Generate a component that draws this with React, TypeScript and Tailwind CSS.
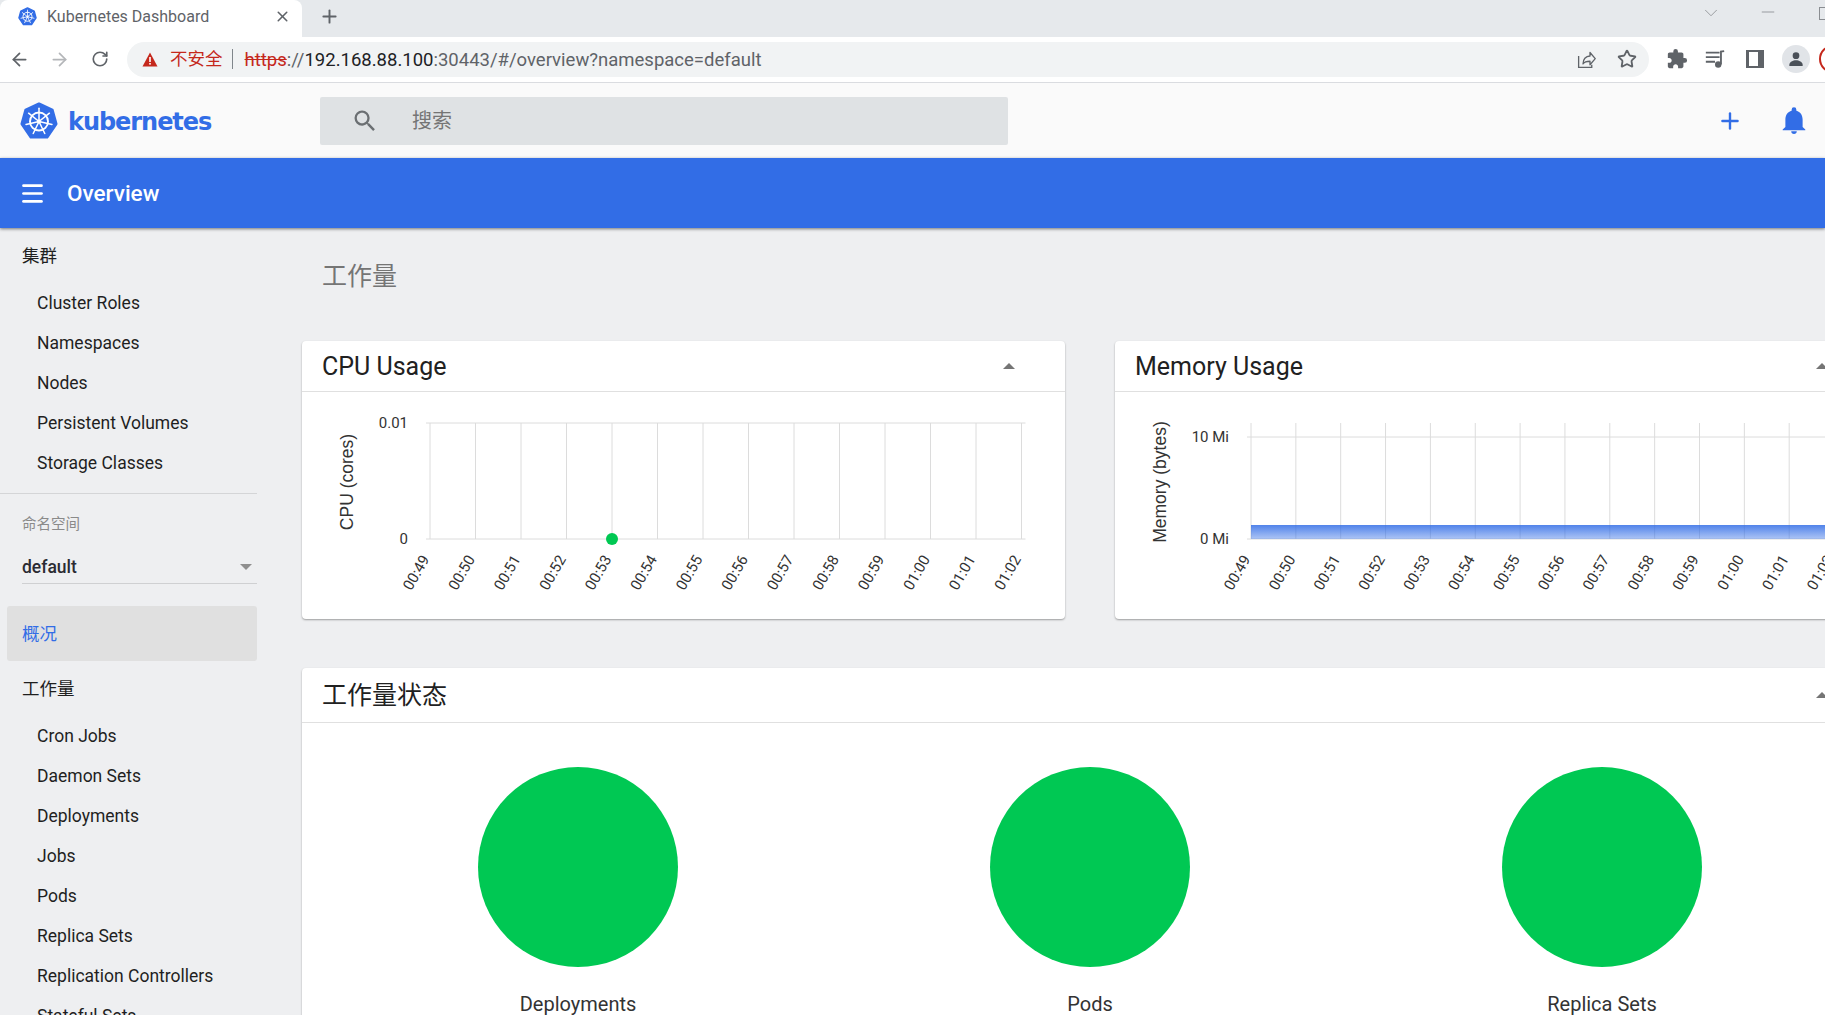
import { ArrowLeft, ArrowRight, RotateCw, Plus, Menu, X, Star, ChevronDown, Minus } from "lucide-react";

const times = ["00:49", "00:50", "00:51", "00:52", "00:53", "00:54", "00:55", "00:56", "00:57", "00:58", "00:59", "01:00", "01:01", "01:02"];

const roboto = "font-['Roboto','Noto_Sans_CJK_SC',sans-serif]";

function KubeLogo({ size }: { size: number }) {
  const spokes = [0, 1, 2, 3, 4, 5, 6].map((i) => (i * 360) / 7);
  return (
    <svg width={size} height={size} viewBox="0 0 40 40">
      <polygon
        points="20,2 34,8.5 38,23 28.5,37 11.5,37 2,23 6,8.5"
        fill="#326de6"
        stroke="#326de6"
        strokeWidth="3"
        strokeLinejoin="round"
      />
      <circle cx="20" cy="20.5" r="9.5" fill="none" stroke="#fff" strokeWidth="2" />
      {spokes.map((a) => (
        <line key={a} x1="20" y1="20.5" x2="20" y2="6.5" stroke="#fff" strokeWidth="1.6" strokeLinecap="round" transform={`rotate(${a} 20 20.5)`} />
      ))}
      <circle cx="20" cy="20.5" r="2.2" fill="#fff" />
    </svg>
  );
}

function TabStrip() {
  return (
    <div className="flex h-[37px] bg-[#e6e9ec]">
      <div className="flex w-[302px] items-center rounded-t-lg bg-white pb-[4px] pl-[18px] pr-[11px]">
        <KubeLogo size={19} />
        <span className={`ml-[10px] flex-1 text-[16px] text-[#5f6368] ${roboto}`}>Kubernetes Dashboard</span>
        <X size={17} className="text-[#5f6368]" strokeWidth={2.2} />
      </div>
      <div className="ml-[15px] flex w-[24px] items-center justify-center pb-[5px]">
        <Plus size={21} className="text-[#5f6368]" strokeWidth={2.2} />
      </div>
      <div className="flex flex-1 items-start justify-end pt-[2px] text-[#8a8d91]">
        <ChevronDown size={22} strokeWidth={0.9} />
        <Minus size={20} strokeWidth={1} className="ml-[36px]" />
        <div className="ml-[41px] mr-[-6px] mt-[5px] h-[13px] w-[12px] shrink-0 border border-[#8a8d91]" />
      </div>
    </div>
  );
}

function AddressBar() {
  return (
    <div className="flex h-[46px] items-center border-b border-[#dadce0] bg-white pb-[1px]">
      <div className="flex w-[127px] shrink-0 items-center pl-[9px] text-[#5f6368]">
        <ArrowLeft size={21} />
        <ArrowRight size={21} className="ml-[19px] text-[#b4b6b9]" />
        <RotateCw size={18} className="ml-[21px]" strokeWidth={2.2} />
      </div>
      <div className={`flex h-[35px] w-[1522px] shrink-0 items-center rounded-full bg-[#f1f3f4] pl-[15px] pr-[12px] ${roboto}`}>
        <svg width="16" height="15" viewBox="0 0 16 15">
          <path d="M8 0.5 L15.5 14.5 L0.5 14.5 Z" fill="#c5281c" />
          <rect x="7.2" y="5" width="1.6" height="5" fill="#fff" />
          <rect x="7.2" y="11" width="1.6" height="1.6" fill="#fff" />
        </svg>
        <span className="ml-[12px] pt-[1px] text-[17.5px] text-[#c5281c]">不安全</span>
        <span className="ml-[9px] h-[20px] w-px bg-[#80868b]" />
        <span className="ml-[12px] flex items-center pt-[3px] text-[18.5px]">
          <span className="text-[#c5281c] line-through">https</span>
          <span className="text-[#5f6368]">://</span>
          <span className="text-[#202124]">192.168.88.100</span>
          <span className="text-[#5f6368]">:30443/#/overview?namespace=default</span>
        </span>
        <div className="ml-auto flex items-center gap-[20px] text-[#5f6368]">
          <svg width="21" height="21" viewBox="0 0 24 24" fill="none" stroke="#5f6368" strokeWidth="1.5">
            <path d="M3 8v13h15v-3" />
            <path d="M8 17c0-5 3-9 8-9V4l6 7-6 7v-4c-3 0-6 0-8 3z" strokeLinejoin="round" />
          </svg>
          <Star size={20} strokeWidth={2.2} />
        </div>
      </div>
      <div className="flex flex-1 items-center pl-[17px] text-[#5f6368]">
        <svg className="shrink-0" width="22" height="22" viewBox="0 0 24 24" fill="#5f6368">
          <path d="M20.5 11H19V7c0-1.1-.9-2-2-2h-4V3.5a2.5 2.5 0 0 0-5 0V5H4c-1.1 0-1.99.9-1.99 2v3.8H3.5c1.49 0 2.7 1.21 2.7 2.7s-1.21 2.7-2.7 2.7H2V20c0 1.1.9 2 2 2h3.8v-1.5c0-1.49 1.21-2.7 2.7-2.7 1.49 0 2.7 1.21 2.7 2.7V22H17c1.1 0 2-.9 2-2v-4h1.5a2.5 2.5 0 0 0 0-5z" />
        </svg>
        <svg className="ml-[16px] shrink-0" width="22" height="22" viewBox="0 0 24 24" fill="none" stroke="#5f6368" strokeWidth="2">
          <path d="M2 5h15M2 10h15M2 15h10" />
          <path d="M18.5 18V4l3.5-.5" />
          <circle cx="15.5" cy="18" r="2.5" fill="#5f6368" />
        </svg>
        <div className="ml-[20px] flex h-[18px] w-[18px] shrink-0 justify-end border-[2.5px] border-l-[3px] border-[#5f6368] bg-white">
          <div className="h-full w-[4px] bg-[#5f6368]" />
        </div>
        <div className="ml-[18px] flex h-[28px] w-[28px] shrink-0 items-center justify-center rounded-full bg-[#e1e4e8]">
          <svg width="20" height="20" viewBox="0 0 24 24" fill="#4a5058">
            <circle cx="12" cy="8" r="4" />
            <path d="M4 19c0-3.5 4.5-5.5 8-5.5s8 2 8 5.5v1.5H4z" />
          </svg>
        </div>
        <div className="ml-[9px] h-[28px] w-[28px] shrink-0 rounded-full border-2 border-[#c5281c]" />
      </div>
    </div>
  );
}

function AppHeader() {
  return (
    <div className="flex h-[75px] items-center bg-[#fafafa]">
      <div className="flex w-[320px] items-center pl-[20px]">
        <KubeLogo size={38} />
        <span className="ml-[10px] pt-[2px] font-['DejaVu_Sans',sans-serif] text-[24px] font-bold tracking-[-1.05px] text-[#326de6]">kubernetes</span>
      </div>
      <div className={`flex h-[48px] w-[688px] items-center rounded-[2px] bg-[#dfe2e4] pl-[31px] ${roboto}`}>
        <svg width="28" height="28" viewBox="0 0 24 24" fill="#6b6f72">
          <path d="M15.5 14h-.79l-.28-.27A6.47 6.47 0 0 0 16 9.5 6.5 6.5 0 1 0 9.5 16c1.61 0 3.09-.59 4.23-1.57l.27.28v.79l5 4.99L20.49 19l-4.99-5zm-6 0C7.01 14 5 11.99 5 9.5S7.01 5 9.5 5 14 7.01 14 9.5 11.99 14 9.5 14z" />
        </svg>
        <span className="ml-[33px] text-[20px] text-[#757575]">搜索</span>
      </div>
      <div className="ml-auto flex items-center pr-[18px] text-[#326de6]">
        <Plus size={26} strokeWidth={2.2} />
        <svg className="ml-[38px]" width="26" height="28" viewBox="0 0 24 26" fill="#326de6">
          <path d="M12 25a2.6 2.6 0 0 0 2.6-2.4H9.4A2.6 2.6 0 0 0 12 25zm8-6.5v-7c0-4-2.2-7.2-5.8-8.1V2.5a2.2 2.2 0 0 0-4.4 0v.9C6.2 4.3 4 7.5 4 11.5v7L1.5 21v.6h21V21z" />
        </svg>
      </div>
    </div>
  );
}

function SideItem({ label }: { label: string }) {
  return <div className="flex h-10 items-center pl-[37px] text-[#1f1f1f]">{label}</div>;
}

function SideHead({ label }: { label: string }) {
  return <div className="flex h-10 items-center pl-[22px] text-[#1f1f1f]">{label}</div>;
}

function Sidebar() {
  return (
    <div className={`w-[302px] shrink-0 pt-[8px] text-[17.5px] ${roboto}`}>
      <SideHead label="集群" />
      <div className="mt-[7px]">
        {["Cluster Roles", "Namespaces", "Nodes", "Persistent Volumes", "Storage Classes"].map((l) => (
          <SideItem key={l} label={l} />
        ))}
      </div>
      <div className="mt-[10px] h-px w-[257px] bg-[#d4d5d7]" />
      <div className="mt-[23px] pl-[22px] text-[14.5px] leading-[16px] text-[#8a8a8a]">命名空间</div>
      <div className="ml-[22px] mt-[18px] flex h-[33px] w-[235px] items-center justify-between border-b border-[#cfd0d2] pr-[5px] font-medium text-[#2b2b33]">
        default
        <span className="h-0 w-0 border-x-[6px] border-t-[6px] border-x-transparent border-t-[#8f8f8f]" />
      </div>
      <div className="ml-[7px] mt-[22px] flex h-[55px] w-[250px] items-center rounded-[3px] bg-[#e0e0e0] pl-[15px] pt-[2px] text-[#326de6]">概况</div>
      <div className="mt-[8px]">
        <SideHead label="工作量" />
      </div>
      <div className="mt-[7px]">
        {["Cron Jobs", "Daemon Sets", "Deployments", "Jobs", "Pods", "Replica Sets", "Replication Controllers", "Stateful Sets"].map((l) => (
          <SideItem key={l} label={l} />
        ))}
      </div>
    </div>
  );
}

function Card({ title, headClass, children }: { title: string; headClass: string; children: React.ReactNode }) {
  return (
    <div className="overflow-hidden rounded-[4px] bg-white shadow-[0_1px_2px_rgba(0,0,0,0.35)]">
      <div className={`flex items-center justify-between border-b border-[#e0e0e0] pl-[20px] pr-[50px] text-[#212121] ${headClass}`}>
        <span className="pt-[2px]">{title}</span>
        <span className="h-0 w-0 border-x-[6px] border-b-[6px] border-x-transparent border-b-[#757575]" />
      </div>
      {children}
    </div>
  );
}

function Chart({ left, step, top, axis, axisX, ticks, area, dot }: { left: number; step: number; top: number; axis: string; axisX: number; ticks: { y: number; label: string }[]; area?: number; dot?: number }) {
  const bottom = 147;
  const right = left + step * 13;
  return (
    <svg width="763" height="227" className="block" fontFamily="Roboto, sans-serif">
      <defs>
        <linearGradient id="memArea" x1="0" y1="0" x2="0" y2="1">
          <stop offset="0" stopColor="#326de6" stopOpacity="0.85" />
          <stop offset="1" stopColor="#326de6" stopOpacity="0.4" />
        </linearGradient>
      </defs>
      {times.map((_, i) => (
        <line key={i} x1={left + i * step} x2={left + i * step} y1={top} y2={bottom} stroke="#dcdcdc" />
      ))}
      {ticks.map((t) => (
        <g key={t.label}>
          <line x1={left - 4} x2={right + 4} y1={t.y} y2={t.y} stroke="#dcdcdc" />
          <text x={left - 22} y={t.y + 5} textAnchor="end" fontSize="15" fill="#333">
            {t.label}
          </text>
        </g>
      ))}
      {area !== undefined && <rect x={left} y={area} width={right - left + 40} height={bottom - area} fill="url(#memArea)" />}
      {times.map((t, i) => (
        <text key={t} x={left + i * step} y={bottom + 20} textAnchor="end" fontSize="15" fill="#333" transform={`rotate(-60 ${left + i * step} ${bottom + 20})`}>
          {t}
        </text>
      ))}
      <text
        x={axisX}
        y={90}
        textAnchor="middle"
        dominantBaseline="central"
        fontFamily="'Liberation Sans', sans-serif"
        fontSize="17.5"
        fill="#333"
        transform={`rotate(-90 ${axisX} 90)`}
      >
        {axis}
      </text>
      {dot !== undefined && <circle cx={left + step * dot} cy={bottom} r="6" fill="#00c853" />}
    </svg>
  );
}

function StatusCircle({ label }: { label: string }) {
  return (
    <div className="flex flex-col items-center">
      <div className="h-[200px] w-[200px] rounded-full bg-[#00c853]" />
      <div className="mt-[23px] text-[20px] leading-[28px] text-[#333]">{label}</div>
    </div>
  );
}

export default function App() {
  return (
    <div className="h-[1015px] w-[1825px] overflow-hidden bg-[#eeeff1]">
      <TabStrip />
      <AddressBar />
      <AppHeader />
      <div className={`flex h-[70px] items-center bg-[#326de6] pl-[19px] pt-[1px] text-white shadow-[0_1px_3px_rgba(0,0,0,0.5)] ${roboto}`}>
        <Menu size={27} strokeWidth={2.4} />
        <span className="ml-[21px] text-[22.5px] font-medium">Overview</span>
      </div>
      <div className="flex">
        <Sidebar />
        <div className={`w-[1576px] shrink-0 ${roboto}`}>
          <div className="pl-[20px] pt-[34px] text-[25px] leading-[30px] text-[#757575]">工作量</div>
          <div className="mt-[49px] grid grid-cols-2 gap-x-[50px]">
            <Card title="CPU Usage" headClass="h-[51px] text-[25px]">
              <div className="h-[227px]">
                <Chart left={128} step={45.5} top={31} axis="CPU (cores)" axisX={45} dot={4} ticks={[{ y: 31, label: "0.01" }, { y: 147, label: "0" }]} />
              </div>
            </Card>
            <Card title="Memory Usage" headClass="h-[51px] text-[25px]">
              <div className="h-[227px]">
                <Chart left={136} step={44.85} top={31} axis="Memory (bytes)" axisX={45} ticks={[{ y: 45, label: "10 Mi" }, { y: 147, label: "0 Mi" }]} area={133} />
              </div>
            </Card>
          </div>
          <div className="mt-[49px]">
            <Card title="工作量状态" headClass="h-[55px] text-[25px] leading-[34px]">
              <div className="grid grid-cols-3 px-[20px] pt-[44px] pb-[40px]">
                <StatusCircle label="Deployments" />
                <StatusCircle label="Pods" />
                <StatusCircle label="Replica Sets" />
              </div>
            </Card>
          </div>
        </div>
      </div>
    </div>
  );
}
